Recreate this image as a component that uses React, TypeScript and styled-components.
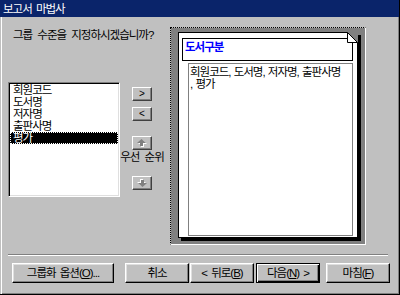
import React from 'react'
import styled, { createGlobalStyle } from 'styled-components'

const GlobalStyle = createGlobalStyle`
    html, body {
        margin: 0;
        padding: 0;
        background: #c0c0c0;
    }
    body {
        font-family: "Liberation Sans", "Noto Sans CJK KR", sans-serif;
        font-size: 11.5px;
        letter-spacing: -1px;
        color: #000;
    }
`

const Window = styled.div`
    position: relative;
    width: 400px;
    height: 295px;
    box-sizing: border-box;
    background: #c0c0c0;
    display: flex;
    flex-direction: column;
    border-right: 1px solid #000;
    border-bottom: 1px solid #000;
    box-shadow: inset 1px 0 0 #c0c0c0, inset 2px 0 0 #fff, inset -1px -1px 0 #808080;
`

const TitleBar = styled.div`
    height: 17px;
    flex-shrink: 0;
    background: #0a246a;
    color: #fff;
    display: flex;
    align-items: center;
    padding-left: 3px;
    line-height: 12px;
    word-spacing: 2px;
`

const Body = styled.div`
    display: flex;
    flex-direction: column;
    padding: 10px 0 0 8px;
`

const Upper = styled.div`
    display: flex;
    height: 218px;
`

const LeftCol = styled.div`
    width: 162px;
    display: flex;
    flex-direction: column;
`

const Question = styled.div`
    margin-top: 2px;
    padding-left: 5px;
    height: 12px;
    line-height: 12px;
    white-space: nowrap;
    word-spacing: 3px;
`

const ListRow = styled.div`
    display: flex;
    gap: 12px;
    margin-top: 41px;
`

const ListBox = styled.div`
    width: 112px;
    height: 115px;
    box-sizing: border-box;
    background: #fff;
    border: 1px solid;
    border-color: #808080 #fff #fff #808080;
    box-shadow: inset 1px 1px 0 #000, inset -1px -1px 0 #dfdfdf;
    padding: 1px;
`

const ListItem = styled.div<{ $selected?: boolean }>`
    height: 12px;
    line-height: 12px;
    padding-left: 3px;
    white-space: nowrap;
    background: ${p => (p.$selected ? '#000' : 'transparent')};
    color: ${p => (p.$selected ? '#fff' : '#000')};
    outline: ${p => (p.$selected ? '1px dotted #fff' : 'none')};
    outline-offset: -1px;
`

const ButtonCol = styled.div`
    width: 20px;
    display: flex;
    flex-direction: column;
    align-items: center;
    padding-top: 5px;
`

const ArrowButton = styled.button<{ $gap: number }>`
    width: 20px;
    height: 14px;
    margin-top: ${p => p.$gap}px;
    padding: 0;
    box-sizing: border-box;
    background: #c0c0c0;
    border: 1px solid;
    border-color: #fff #404040 #404040 #fff;
    box-shadow: inset -1px -1px 0 #808080;
    font-family: "Liberation Sans", sans-serif;
    font-size: 10px;
    line-height: 10px;
    color: #000;
    display: flex;
    align-items: center;
    justify-content: center;
`

const PriorityLabel = styled.div`
    margin-top: 1px;
    height: 12px;
    line-height: 12px;
    white-space: nowrap;
    word-spacing: 3px;
`

const Preview = styled.div`
    width: 196px;
    height: 218px;
    box-sizing: border-box;
    background: #808080;
    background-clip: padding-box;
    border: 1px solid #fff;
    border-top: 1px dotted #000;
    border-left: 1px dotted #000;
    padding: 4px 0 0 7px;
`

const Paper = styled.div`
    position: relative;
    width: 180px;
    height: 206px;
    box-sizing: border-box;
    background: #fff;
    border: 1px solid #000;
    box-shadow: 3px 3px 0 #000;
    display: flex;
    flex-direction: column;
`

const Fold = styled.svg`
    position: absolute;
    top: -1px;
    right: -1px;
    width: 11px;
    height: 11px;
`

const GroupHeader = styled.div`
    margin: 5px 0 0 3px;
    width: 171px;
    height: 23px;
    box-sizing: border-box;
    border: 1px solid #000;
    padding: 2px 2px;
    color: #0000ff;
    font-weight: bold;
    line-height: 12px;
`

const DetailBox = styled.div`
    margin: 2px 0 0 9px;
    width: 165px;
    height: 173px;
    box-sizing: border-box;
    border: 1px solid #808080;
    padding: 2px 1px;
    line-height: 12px;
    white-space: nowrap;
    word-spacing: 1px;
`

const Separator = styled.div`
    margin-top: 9px;
    width: 380px;
    border-top: 1px solid #808080;
    border-bottom: 1px solid #fff;
`

const ButtonRow = styled.div`
    display: flex;
    margin-top: 7px;
    padding-left: 4px;
`

const Button = styled.button<{ $width: number; $gap: number; $default?: boolean }>`
    width: ${p => p.$width}px;
    height: 20px;
    margin-left: ${p => p.$gap}px;
    padding: 0;
    box-sizing: border-box;
    background: #c0c0c0;
    border: 1px solid;
    border-color: ${p => (p.$default ? '#000' : '#fff #000 #000 #fff')};
    box-shadow: ${p =>
        p.$default
            ? 'inset 1px 1px 0 #fff, inset -1px -1px 0 #000, inset -2px -2px 0 #808080'
            : 'inset -1px -1px 0 #808080, inset 1px 1px 0 #dfdfdf'};
    font-family: "Liberation Sans", "Noto Sans CJK KR", sans-serif;
    font-size: 11.5px;
    letter-spacing: -1px;
    word-spacing: 2px;
    line-height: 12px;
    color: #000;
    white-space: nowrap;

    u {
        text-decoration: underline;
    }
`

const Arrow = ({ down }: { down?: boolean }) => (
    <svg width="10" height="8" viewBox="0 0 10 8" style={{ transform: down ? 'rotate(180deg)' : undefined }}>
        <path d="M4.5 0 L9 4 L6 4 L6 7 L3 7 L3 4 L0 4 Z" fill="#fff" transform="translate(1 1)" />
        <path d="M4.5 0 L9 4 L6 4 L6 7 L3 7 L3 4 L0 4 Z" fill="#808080" />
    </svg>
)

const fields = ['회원코드', '도서명', '저자명', '출판사명', '평가']

export default function App() {
    return (
        <Window>
            <GlobalStyle />
            <TitleBar>보고서 마법사</TitleBar>
            <Body>
                <Upper>
                    <LeftCol>
                        <Question>그룹 수준을 지정하시겠습니까?</Question>
                        <ListRow>
                            <ListBox>
                                {fields.map(f => (
                                    <ListItem key={f} $selected={f === '평가'}>{f}</ListItem>
                                ))}
                            </ListBox>
                            <ButtonCol>
                                <ArrowButton $gap={0}>&gt;</ArrowButton>
                                <ArrowButton $gap={6}>&lt;</ArrowButton>
                                <ArrowButton $gap={15}><Arrow /></ArrowButton>
                                <PriorityLabel>우선 순위</PriorityLabel>
                                <ArrowButton $gap={13}><Arrow down /></ArrowButton>
                            </ButtonCol>
                        </ListRow>
                    </LeftCol>
                    <Preview>
                        <Paper>
                            <Fold viewBox="0 0 11 11">
                                <polygon points="0,0 11,0 11,11" fill="#808080" />
                                <polygon points="0.5,0.5 10.5,10.5 0.5,10.5" fill="#fff" stroke="#000" strokeWidth="1" />
                            </Fold>
                            <GroupHeader>도서구분</GroupHeader>
                            <DetailBox>
                                회원코드, 도서명, 저자명, 출판사명
                                <br />, 평가
                            </DetailBox>
                        </Paper>
                    </Preview>
                </Upper>
                <Separator />
                <ButtonRow>
                    <Button $width={102} $gap={0}>그룹화 옵션(<u>O</u>)...</Button>
                    <Button $width={64} $gap={11}>취소</Button>
                    <Button $width={64} $gap={1}>&lt; 뒤로(<u>B</u>)</Button>
                    <Button $width={64} $gap={2} $default>다음(<u>N</u>) &gt;</Button>
                    <Button $width={64} $gap={6}>마침(<u>F</u>)</Button>
                </ButtonRow>
            </Body>
        </Window>
    )
}
